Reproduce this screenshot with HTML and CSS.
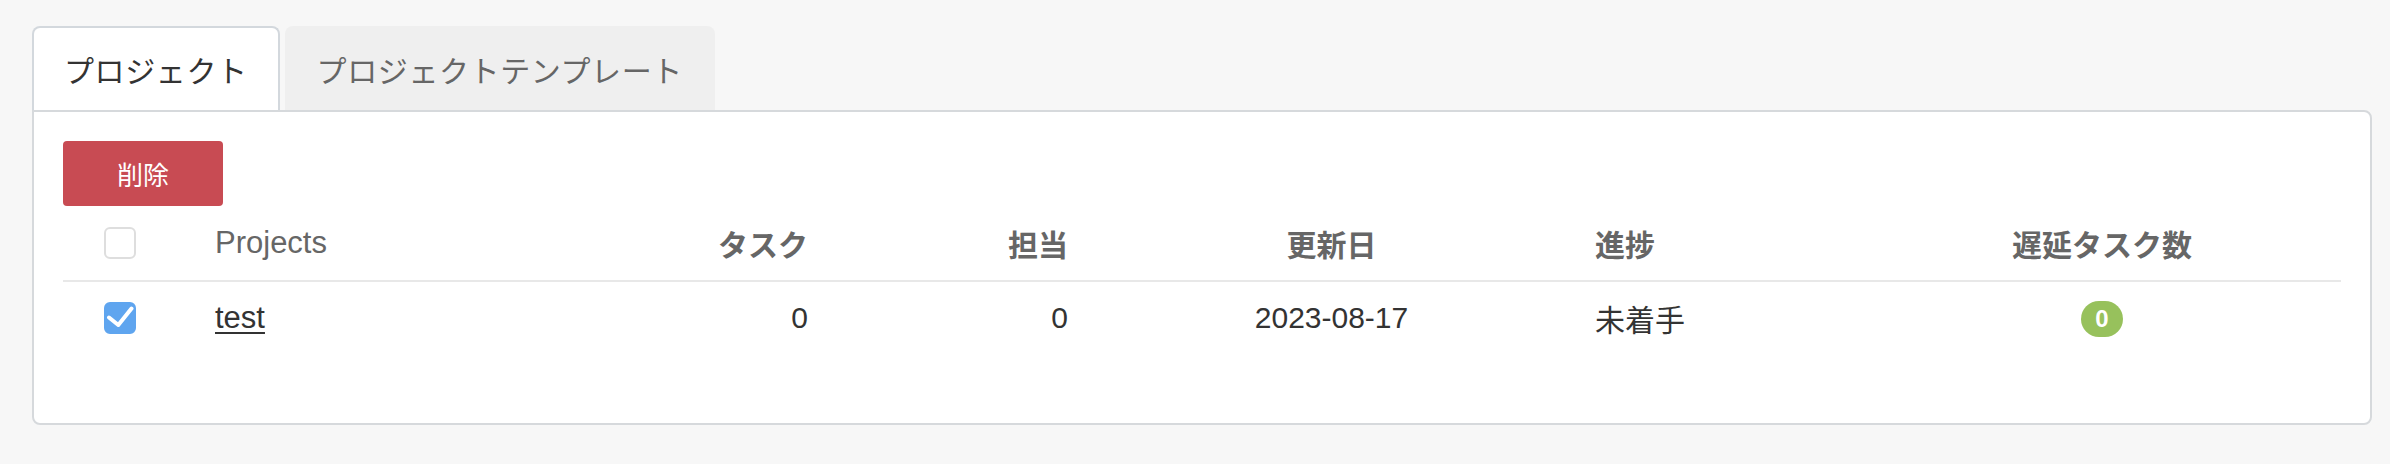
FILE: index.html
```html
<!DOCTYPE html>
<html lang="ja">
<head>
    <meta charset="UTF-8">
    <meta name="viewport" content="width=device-width, initial-scale=1.0">
    <title>プロジェクト</title>
    <link rel="stylesheet" href="styles.css">
</head>
<body>

<div class="page">
    <ul class="tabs">
        <li class="tab active">プロジェクト</li>
        <li class="tab">プロジェクトテンプレート</li>
    </ul>

    <div class="panel">
        <button class="btn-delete" type="button">削除</button>

        <table class="projects">
            <colgroup>
                <col class="col-check">
                <col class="col-name">
                <col class="col-task">
                <col class="col-owner">
                <col class="col-date">
                <col class="col-status">
                <col class="col-late">
            </colgroup>
            <thead>
                <tr>
                    <th class="cell-check"><span class="check"></span></th>
                    <th class="name">Projects</th>
                    <th class="num">タスク</th>
                    <th class="num">担当</th>
                    <th class="center">更新日</th>
                    <th>進捗</th>
                    <th class="center">遅延タスク数</th>
                </tr>
            </thead>
            <tbody>
                <tr>
                    <td class="cell-check">
                        <span class="check checked">
                            <svg viewBox="0 0 28 28" width="28" height="28"><path d="M3 13.5 L12.3 21 L25.5 4.5" fill="none" stroke="#fff" stroke-width="4" stroke-linecap="round" stroke-linejoin="round"/></svg>
                        </span>
                    </td>
                    <td><a href="#" class="project-link">test</a></td>
                    <td class="num">0</td>
                    <td class="num">0</td>
                    <td class="center">2023-08-17</td>
                    <td>未着手</td>
                    <td class="center"><span class="badge">0</span></td>
                </tr>
            </tbody>
        </table>
    </div>
</div>

</body>
</html>
```

FILE: styles.css
```css
body {
    margin: 0;
    background-color: #f7f7f7;
    font-family: "Liberation Sans", "Noto Sans CJK JP", sans-serif;
    color: #333;
}
.page {
    padding: 26px 18px 0 32px;
}

/* tabs */
.tabs {
    list-style: none;
    margin: 0;
    padding: 0;
    display: flex;
    gap: 5px;
}
.tab {
    height: 84px;
    box-sizing: border-box;
    padding: 0 30px;
    display: flex;
    align-items: center;
    font-size: 30px;
    letter-spacing: 0.6px;
    color: #666;
    background-color: #efefef;
    border: 2px solid transparent;
    border-bottom: 0;
    border-radius: 8px 8px 0 0;
}
.tab.active {
    background-color: #fff;
    color: #333;
    border-color: #d3d8dd;
}

/* panel */
.panel {
    background-color: #fff;
    border: 2px solid #d6d9dc;
    border-radius: 0 8px 8px 8px;
    padding: 29px;
}
.btn-delete {
    display: block;
    width: 160px;
    height: 65px;
    border: none;
    border-radius: 4px;
    background-color: #c84b53;
    color: #fff;
    font-family: inherit;
    font-size: 26px;
    cursor: pointer;
}

/* table */
.projects {
    width: 100%;
    border-collapse: collapse;
    table-layout: fixed;
    margin-bottom: 40px;
}
.col-check { width: 136px; }
.col-name { width: 365px; }
.col-task { width: 260px; }
.col-owner { width: 260px; }
.col-date { width: 495px; }
.col-status { width: 284px; }
.col-late { width: 478px; }

.projects th,
.projects td {
    padding: 0 16px;
    font-size: 30px;
    text-align: left;
    vertical-align: middle;
}
.projects thead th {
    height: 74px;
    color: #666;
    font-weight: bold;
    border-bottom: 2px solid #e8e8e8;
}
.projects thead th.name {
    font-weight: normal;
    font-size: 31px;
}
.projects tbody td {
    height: 72px;
    color: #333;
}
.projects .num {
    text-align: right;
}
.projects .center {
    text-align: center;
}
.projects .cell-check {
    padding-left: 41px;
}

.check {
    display: block;
    width: 32px;
    height: 32px;
    box-sizing: border-box;
    border: 2px solid #dedede;
    border-radius: 6px;
    background-color: #fff;
}
.check.checked {
    background-color: #5fa5ef;
    border-color: #5fa5ef;
}
.check svg {
    display: block;
}

.project-link {
    color: #333;
    font-size: 31px;
    text-decoration: underline;
    text-decoration-thickness: 2px;
    text-underline-offset: 4px;
}
.badge {
    display: inline-block;
    min-width: 42px;
    height: 36px;
    line-height: 36px;
    border-radius: 18px;
    background-color: #97c15c;
    color: #fff;
    font-size: 24px;
    font-weight: bold;
    text-align: center;
}
```
